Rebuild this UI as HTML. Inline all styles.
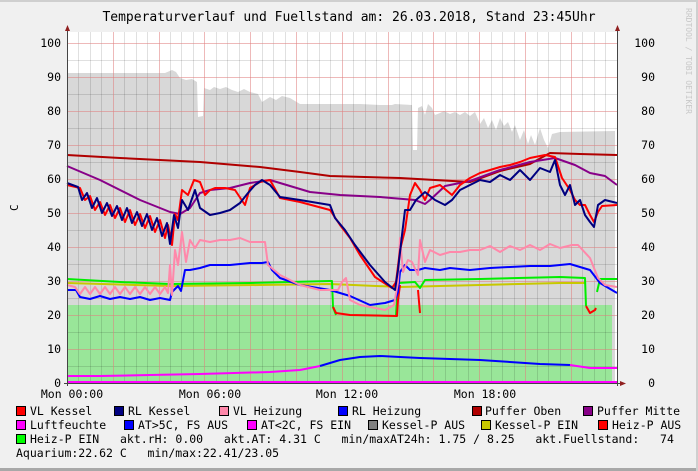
<!DOCTYPE html>
<html><head><meta charset="utf-8"><style>
html,body{margin:0;padding:0;background:#f0f0f0}
body{width:698px;height:471px;overflow:hidden;position:relative;font-family:"DejaVu Sans Mono","Liberation Mono",monospace}
svg{position:absolute;left:0;top:0}
text{font-family:"DejaVu Sans Mono","Liberation Mono",monospace;white-space:pre}
</style></head><body>
<svg width="698" height="471" viewBox="0 0 698 471" xmlns="http://www.w3.org/2000/svg">
<rect x="0" y="0" width="698" height="471" fill="#f0f0f0"/>
<rect x="0" y="468" width="698" height="3" fill="#a8a8a8"/>
<rect x="696" y="0" width="2" height="471" fill="#cfcfcf"/>
<rect x="0" y="0" width="698" height="2" fill="#cfcfcf"/>
<text x="349" y="21" font-size="13" text-anchor="middle" fill="#000">Temperaturverlauf und Fuellstand am: 26.03.2018, Stand 23:45Uhr</text>
<text transform="translate(686,8) rotate(90)" font-size="8" fill="#c8c8c8">RRDTOOL / TOBI OETIKER</text>
<text transform="translate(18,211) rotate(-90)" font-size="11" fill="#000">C</text>
<rect x="67" y="32" width="550" height="351" fill="#fff"/>
<polygon fill="#d8d8d8" points="67,383 67,73 165,73 172,70 176,72 180,78 186,80 192,79 197,82 198,117 203,116 204,88 210,90 214,87 220,89 226,87 232,90 238,92 244,89 250,92 258,94 262,102 270,97 276,100 282,96 290,98 300,104 320,104 340,104 360,104 380,105 392,105 395,104 412,105 413,150 417,150 418,108 422,106 425,115 428,104 432,108 435,115 440,113 444,111 450,114 455,112 460,115 465,112 470,116 475,112 480,124 484,118 488,128 492,120 496,130 500,118 504,126 508,122 512,132 515,125 520,140 524,130 528,144 531,135 535,145 540,128 544,140 548,148 552,134 560,132 615,131 615,383"/>
<rect x="67" y="305" width="545" height="78" fill="#99e699"/>
<g stroke="#000" stroke-opacity="0.12" stroke-width="1">
<path d="M67.5 366.5H617M67.5 332.5H617M67.5 298.5H617M67.5 264.5H617M67.5 230.5H617M67.5 196.5H617M67.5 162.5H617M67.5 128.5H617M67.5 94.5H617M67.5 60.5H617"/>
<path d="M78.5 32V383M90.5 32V383M101.5 32V383M124.5 32V383M136.5 32V383M147.5 32V383M170.5 32V383M181.5 32V383M193.5 32V383M216.5 32V383M227.5 32V383M239.5 32V383M262.5 32V383M273.5 32V383M285.5 32V383M307.5 32V383M319.5 32V383M330.5 32V383M353.5 32V383M365.5 32V383M376.5 32V383M399.5 32V383M411.5 32V383M422.5 32V383M445.5 32V383M456.5 32V383M468.5 32V383M491.5 32V383M502.5 32V383M514.5 32V383M537.5 32V383M548.5 32V383M560.5 32V383M582.5 32V383M594.5 32V383M605.5 32V383"/>
</g>
<g stroke="#e08080" stroke-opacity="0.55" stroke-width="1">
<path d="M67 349.5H617M67 315.5H617M67 281.5H617M67 247.5H617M67 213.5H617M67 179.5H617M67 145.5H617M67 111.5H617M67 77.5H617M67 43.5H617"/>
<path d="M113.5 32V383M159.5 32V383M204.5 32V383M250.5 32V383M296.5 32V383M342.5 32V383M388.5 32V383M433.5 32V383M479.5 32V383M525.5 32V383M571.5 32V383"/>
</g>
<g fill="none" stroke-width="2" stroke-linejoin="round">
<polyline stroke="#b00000" points="67,155 120,158 200,162 260,167 300,172 330,176 400,178 470,182 500,171 530,164 550,153 580,154 617,155"/>
<polyline stroke="#c8c800" points="67,283 170,286 260,285 330,284 400,287 480,285 560,283 585,283"/>
<polyline stroke="#00ee00" points="67,279 120,282 170,284 250,283 330,281 332,281 333,307 336,315"/>
<polyline stroke="#00ee00" points="396,315 398,283 415,282 420,288 425,280 480,279 560,277 585,278 586,306"/>
<polyline stroke="#00ee00" points="597,292 600,279 617,279"/>
<polyline stroke="#ff0000" points="333,307 336,313 350,315 397,316 398,300 400,285"/>
<polyline stroke="#ff0000" points="418,290 420,313"/>
<polyline stroke="#ff0000" points="586,306 590,313 595,310 596,308"/>
<polyline stroke="#0000ff" points="67,290 76,290 80,297 90,299 100,296 110,299 120,297 130,299 140,297 150,300 160,298 170,300 172,292 178,286 181,291 185,270 190,270 200,268 210,265 230,265 250,263 262,263 268,262 272,270 280,278 300,285 330,290 350,296 370,305 385,303 395,300 398,292 400,272 405,265 410,270 418,270 425,268 440,270 450,268 470,270 490,268 510,267 530,266 550,266 570,264 590,270 600,283 617,293"/>
<polyline stroke="#ff88aa" points="67,285 75,287 80,294 85,287 90,294 95,287 100,294 105,287 110,294 115,287 120,294 125,287 130,294 135,287 140,294 145,287 150,294 155,287 160,294 165,287 168,293 170,265 172,295 175,250 178,265 182,232 186,262 190,240 195,248 200,240 210,242 220,240 230,240 240,238 250,242 265,242 268,265 280,275 300,285 320,290 338,290 342,282 346,278 350,300 360,305 385,310 394,305 398,282 400,238 403,272 408,260 412,262 418,275 420,240 425,262 430,250 440,255 450,252 460,252 470,250 480,250 490,246 500,252 510,246 520,250 530,245 540,250 550,244 560,248 572,245 578,245 590,258 598,278 605,285 617,287"/>
<polyline stroke="#880088" points="67,166 100,180 140,200 170,212 180,214 190,208 200,193 210,190 230,188 250,183 270,180 290,186 310,192 340,195 380,197 415,200 425,204 430,200 445,186 470,181 500,170 530,162 555,158 575,165 590,173 605,176 617,185"/>
<polyline stroke="#ff0000" points="67,185 80,188 85,200 90,196 95,210 100,202 105,215 110,205 115,218 120,208 125,222 130,210 135,225 140,214 145,228 150,216 155,232 160,220 165,238 168,225 172,245 175,214 178,220 182,190 188,195 194,180 200,182 205,195 210,190 215,188 225,188 235,190 245,205 250,188 260,182 270,180 280,198 300,202 330,210 340,225 350,238 360,255 375,277 392,288 396,282 400,250 405,230 410,195 415,183 420,190 425,200 430,188 440,185 452,195 460,185 470,178 480,173 490,170 500,167 510,165 520,162 530,158 545,155 555,157 562,178 570,190 575,200 580,205 585,205 590,215 594,222 598,212 602,206 617,205"/>
<polyline stroke="#000080" points="67,183 78,187 82,200 87,193 92,208 97,198 102,213 107,203 112,216 117,206 122,220 127,208 132,223 137,212 142,226 147,214 152,230 157,218 162,236 167,223 170,244 174,215 178,228 182,200 188,210 195,190 200,208 210,215 220,213 230,210 240,203 248,193 255,185 262,180 270,185 280,197 300,200 330,205 335,218 345,230 355,245 370,265 385,282 395,290 398,270 402,235 405,210 410,210 416,200 425,192 435,200 445,205 452,200 460,190 470,185 480,180 490,182 500,175 510,180 520,170 530,180 540,168 550,172 555,160 560,185 565,195 570,185 575,205 580,200 585,215 590,222 594,227 598,205 605,200 617,203"/>
<polyline stroke="#ff00ff" points="67,376 100,376 150,375 200,374 270,372 300,370 320,366"/>
<polyline stroke="#0000ff" points="320,366 340,360 360,357 380,356 400,357 420,358 450,359 480,360 510,362 540,364 570,365"/>
<polyline stroke="#ff00ff" points="570,365 590,368 617,368"/>
<polyline stroke="#ff00ff" points="67,382 617,382"/>
</g>
<path d="M67.5 28V386M617.5 28V386M64 383.5H623" stroke="#444" stroke-width="1"/>
<polygon points="67.5,25 65,31 70,31" fill="#902020"/>
<polygon points="617.5,25 615,31 620,31" fill="#902020"/>
<polygon points="626,383.5 620,381 620,386" fill="#902020"/>
<g font-size="11.5" fill="#000" text-anchor="end">
<text x="61" y="47">100</text><text x="61" y="81">90</text><text x="61" y="115">80</text><text x="61" y="149">70</text><text x="61" y="183">60</text><text x="61" y="217">50</text><text x="61" y="251">40</text><text x="61" y="285">30</text><text x="61" y="319">20</text><text x="61" y="353">10</text><text x="61" y="387">0</text>
<text x="655" y="47">100</text><text x="655" y="81">90</text><text x="655" y="115">80</text><text x="655" y="149">70</text><text x="655" y="183">60</text><text x="655" y="217">50</text><text x="655" y="251">40</text><text x="655" y="285">30</text><text x="655" y="319">20</text><text x="655" y="353">10</text><text x="655" y="387">0</text>
</g>
<g font-size="11.5" fill="#000" text-anchor="middle">
<text x="72" y="398">Mon 00:00</text><text x="210" y="398">Mon 06:00</text><text x="347" y="398">Mon 12:00</text><text x="485" y="398">Mon 18:00</text>
</g>
<g stroke="#000" stroke-width="1">
<rect x="16.5" y="406.5" width="9" height="9" fill="#ff0000"/>
<rect x="114.5" y="406.5" width="9" height="9" fill="#000080"/>
<rect x="219.5" y="406.5" width="9" height="9" fill="#ff88aa"/>
<rect x="338.5" y="406.5" width="9" height="9" fill="#0000ff"/>
<rect x="472.5" y="406.5" width="9" height="9" fill="#b00000"/>
<rect x="583.5" y="406.5" width="9" height="9" fill="#880088"/>
<rect x="16.5" y="420.5" width="9" height="9" fill="#ff00ff"/>
<rect x="124.5" y="420.5" width="9" height="9" fill="#0000ff"/>
<rect x="247.5" y="420.5" width="9" height="9" fill="#ff00ff"/>
<rect x="368.5" y="420.5" width="9" height="9" fill="#808080"/>
<rect x="481.5" y="420.5" width="9" height="9" fill="#c8c800"/>
<rect x="598.5" y="420.5" width="9" height="9" fill="#ff0000"/>
<rect x="16.5" y="434.5" width="9" height="9" fill="#00ff00"/>
</g>
<g font-size="11.5" fill="#000">
<text x="30" y="415">VL Kessel</text>
<text x="128" y="415">RL Kessel</text>
<text x="233" y="415">VL Heizung</text>
<text x="352" y="415">RL Heizung</text>
<text x="485" y="415">Puffer Oben</text>
<text x="597" y="415">Puffer Mitte</text>
<text x="30" y="429">Luftfeuchte</text>
<text x="138" y="429">AT&gt;5C, FS AUS</text>
<text x="261" y="429">AT&lt;2C, FS EIN</text>
<text x="382" y="429">Kessel-P AUS</text>
<text x="495" y="429">Kessel-P EIN</text>
<text x="612" y="429">Heiz-P AUS</text>
<text x="30" y="443">Heiz-P EIN   akt.rH: 0.00   akt.AT: 4.31 C   min/maxAT24h: 1.75 / 8.25   akt.Fuellstand:   74</text>
<text x="16" y="457">Aquarium:22.62 C   min/max:22.41/23.05</text>
</g>
</svg>
</body></html>
